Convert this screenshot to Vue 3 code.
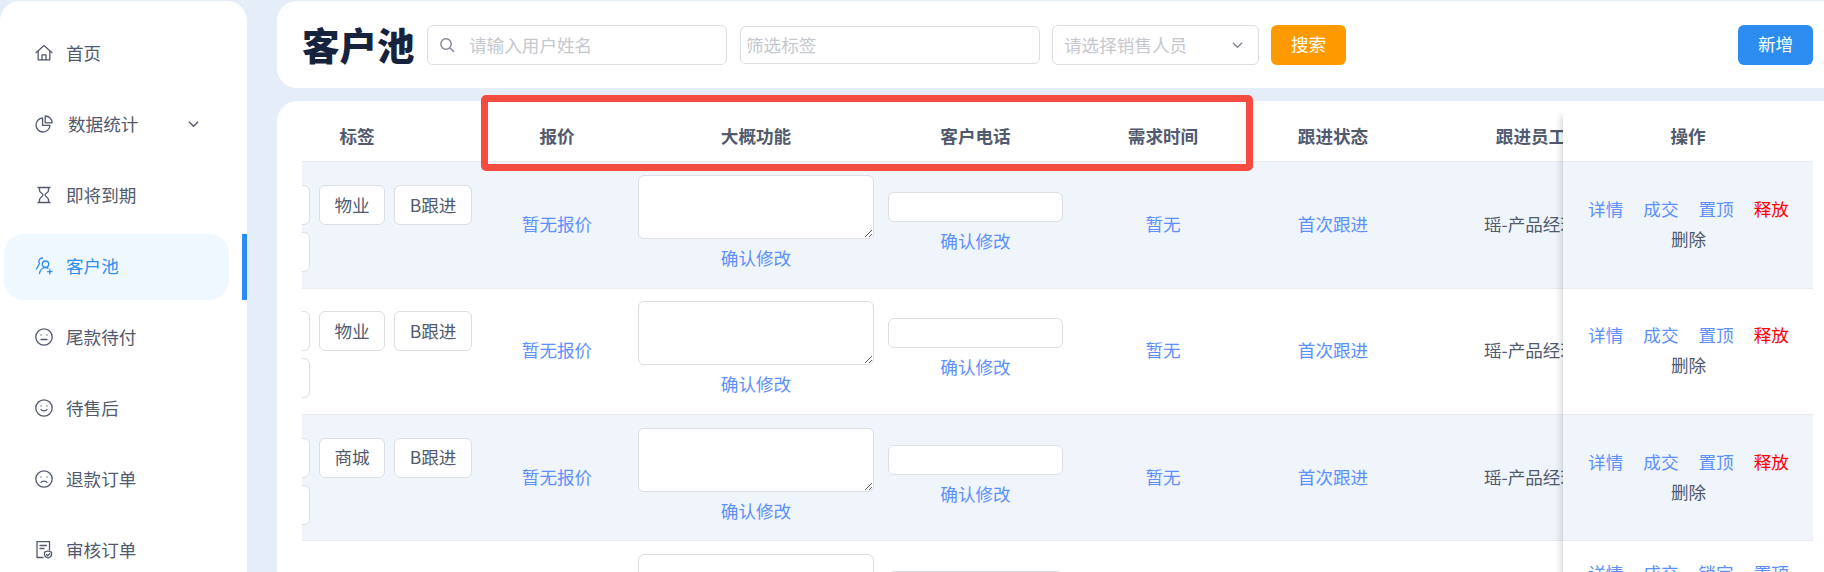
<template>
  <div class="page">
    <!-- SIDEBAR -->
    <aside class="side">
      <div v-for="m in menu" :key="m.name" class="menu-item" :class="{ active: m.active }">
        <svg class="menu-icon" viewBox="0 0 18 18" fill="none" stroke="currentColor" stroke-width="1.3" stroke-linecap="round" stroke-linejoin="round">
          <path v-for="(d, i) in m.paths" :key="i" :d="d" />
        </svg>
        <span class="menu-name" :class="{ shifted: m.arrow }">{{ m.name }}</span>
        <svg v-if="m.arrow" class="menu-arrow" viewBox="0 0 12 8" fill="none" stroke="currentColor" stroke-width="1.5">
          <path d="M1 1.5l5 5 5-5" />
        </svg>
      </div>
    </aside>

    <main class="main">
      <!-- TOOLBAR -->
      <div class="toolbar">
        <h1 class="title">客户池</h1>
        <div class="search-box">
          <svg class="search-icon" viewBox="0 0 16 16" fill="none" stroke="#808695" stroke-width="1.4" stroke-linecap="round">
            <circle cx="7" cy="7" r="5.2" />
            <path d="M11 11l3.6 3.6" />
          </svg>
          <input class="search-input" placeholder="请输入用户姓名" />
        </div>
        <input class="tag-filter" placeholder="筛选标签" />
        <div class="sales-select">
          <span>请选择销售人员</span>
          <svg class="select-arrow" viewBox="0 0 12 8" fill="none" stroke="#808695" stroke-width="1.5">
            <path d="M1 1.5l5 5 5-5" />
          </svg>
        </div>
        <button class="btn btn-orange">搜索</button>
        <button class="btn btn-blue">新增</button>
      </div>

      <!-- TABLE -->
      <div class="card">
        <div class="table-wrap">
          <div class="table-scroll">
            <div class="row head">
              <div class="cell c-tags">标签</div>
              <div class="cell c-price">报价</div>
              <div class="cell c-func">大概功能</div>
              <div class="cell c-phone">客户电话</div>
              <div class="cell c-time">需求时间</div>
              <div class="cell c-state">跟进状态</div>
              <div class="cell c-staff">跟进员工</div>
            </div>
            <div v-for="(r, idx) in rows" :key="idx" class="row body" :class="{ striped: idx % 2 === 0 }">
              <div class="cell c-tags">
                <div class="tags">
                  <span v-for="(t, i) in r.tags" :key="i" class="tag">{{ t }}</span>
                </div>
              </div>
              <div class="cell c-price link">暂无报价</div>
              <div class="cell c-func col">
                <textarea class="func-text"></textarea>
                <a class="link confirm">确认修改</a>
              </div>
              <div class="cell c-phone col">
                <input class="phone-input" />
                <a class="link confirm">确认修改</a>
              </div>
              <div class="cell c-time link">暂无</div>
              <div class="cell c-state link">首次跟进</div>
              <div class="cell c-staff">瑶-产品经理</div>
            </div>
          </div>

          <!-- fixed right column lies over the scrolled table -->
          <div class="fixed-col">
            <div class="row head"><div class="cell">操作</div></div>
            <div v-for="(r, idx) in rows" :key="idx" class="row body" :class="{ striped: idx % 2 === 0 }">
              <div class="actions">
                <a v-for="a in r.actions" :key="a.label" class="action" :class="a.kind">{{ a.label }}</a>
              </div>
            </div>
          </div>
        </div>
      </div>
    </main>

    <!-- red annotation frame drawn over the screenshot -->
    <div class="mark"></div>
  </div>
</template>

<script setup>
const menu = [
  { name: "首页", paths: ["M1 8.8L9 1.6l8 7.200", "M3.200 7.500v8.300h11.600V7.500", "M7 15.800v-5h4v5"] },
  { name: "数据统计", arrow: true, paths: ["M7.600 3a7 7 0 1 0 7.400 7.400H7.600z", "M10.200 1v6.800h7A7 7 0 0 0 10.200 1z"] },
  { name: "即将到期", paths: ["M3 1.500h12", "M3 16.500h12", "M4.500 2v2.500C4.500 6.500 8 7.500 8 9s-3.500 2.500-3.500 4.500V16", "M13.500 2v2.500C13.500 6.500 10 7.500 10 9s3.500 2.500 3.500 4.500V16"] },
  { name: "客户池", active: true, paths: ["M7.500 1a3.500 3.500 0 0 0-3 5.500L1.500 12", "M10.500 4a3.200 3.200 0 1 1 0 6.400 3.200 3.200 0 0 1 0-6.400z", "M4.500 16.500c.5-3.500 3-6 6-6 1 0 1.800.2 2.500.6", "M14.800 12.500v4.400M12.600 14.700H17"] },
  { name: "尾款待付", paths: ["M9 .8a8.200 8.200 0 1 0 0 16.400A8.200 8.200 0 0 0 9 .8z", "M6 7v.1M12 7v.1", "M6 11.500h6"] },
  { name: "待售后", paths: ["M9 .8a8.200 8.200 0 1 0 0 16.400A8.200 8.200 0 0 0 9 .8z", "M6 7v.1M12 7v.1", "M6 10.500c.8 1.800 5.200 1.800 6 0"] },
  { name: "退款订单", paths: ["M9 .8a8.200 8.200 0 1 0 0 16.400A8.200 8.200 0 0 0 9 .8z", "M6 7v.1M12 7v.1", "M6 12.500c.8-1.800 5.200-1.800 6 0"] },
  { name: "审核订单", paths: ["M8 16.500H2v-16h12.500V9", "M5 4.500h6.500M5 7.500h4", "M13 10l3.500 1.200v2.500c0 1.500-1.500 2.500-3.500 3.300-2-.8-3.500-1.800-3.500-3.300v-2.500z", "M11.500 13.500l1.200 1.200 2-2"] },
];

const baseActions = [
  { label: "详情", kind: "blue" },
  { label: "成交", kind: "blue" },
  { label: "置顶", kind: "blue" },
  { label: "释放", kind: "red" },
  { label: "删除", kind: "grey" },
];

// first tag of each row sits under the left edge of the scrolled table
const rows = [
  { tags: ["", "物业", "B跟进", ""], actions: baseActions },
  { tags: ["", "物业", "B跟进", ""], actions: baseActions },
  { tags: ["", "商城", "B跟进", ""], actions: baseActions },
  {
    tags: ["", "物业", "B跟进"],
    actions: [
      { label: "详情", kind: "blue" },
      { label: "成交", kind: "blue" },
      { label: "锁定", kind: "blue" },
      { label: "置顶", kind: "blue" },
      { label: "释放", kind: "red" },
      { label: "删除", kind: "grey" },
    ],
  },
];
</script>

<style>
html, body { margin: 0; background: #e4edf8; overflow: hidden; }
</style>

<style scoped>
.page {
  position: relative;
  display: flex;
  height: 572px;
  overflow: hidden;
  padding-top: 1px;
  box-sizing: border-box;
  background: #e4edf8;
  font-family: "Noto Sans CJK SC", "Liberation Sans", sans-serif;
  font-size: 17.6px;
  color: #515a6e;
}

/* ── Sidebar ── */
.side {
  position: relative;
  width: 247px;
  flex: none;
  box-sizing: border-box;
  padding: 20px 18px 0 4px;
  background: #fff;
  border-radius: 20px 20px 0 0;
  display: flex;
  flex-direction: column;
  gap: 5px;
}

.menu-item {
  position: relative;
  flex: none;
  height: 66px;
  display: flex;
  align-items: center;
  padding-left: 31px;
  border-radius: 20px;
  color: #515a6e;
}

.menu-item.active {
  background: #f0f8ff;
  color: #2d8cf0;
}

.menu-item.active::after {
  content: "";
  position: absolute;
  top: 0;
  bottom: 0;
  left: 238px;
  width: 5px;
  background: #2d8cf0;
}

.menu-icon { width: 18px; height: 18px; flex: none; margin-bottom: 2px; }
.menu-name { margin: 0 0 3px 13px; }
.menu-name.shifted { margin-left: 15px; }
.menu-arrow { width: 11px; height: 8px; margin-left: 50px; margin-bottom: 3px; }

/* ── Toolbar ── */
.main { flex: 1; min-width: 0; margin-left: 30px; }

.toolbar {
  height: 87px;
  box-sizing: border-box;
  display: flex;
  align-items: center;
  padding: 0 11px 0 26px;
  background: #fff;
  border-radius: 20px 0 0 20px;
}

.title {
  width: 113px;
  flex: none;
  margin: 0 12px 2px -1px;
  font-size: 37.5px;
  font-weight: 900;
  line-height: 40px;
  white-space: nowrap;
  color: #17233d;
}

.search-box {
  position: relative;
  width: 300px;
  height: 40px;
  margin-right: 13px;
}

.search-icon {
  position: absolute;
  top: 12px;
  left: 12px;
  width: 16px;
  height: 16px;
}

input, textarea {
  box-sizing: border-box;
  border: 1px solid #dcdee2;
  border-radius: 6px;
  background: #fff;
  font: inherit;
  color: #515a6e;
  outline: none;
}

input::placeholder { color: #c5c8ce; }

.search-input {
  width: 100%;
  height: 100%;
  padding: 0 8px 0 41px;
}

.tag-filter {
  width: 300px;
  height: 38px;
  padding: 0 5px;
  margin-right: 12px;
}

.sales-select {
  width: 207px;
  height: 40px;
  box-sizing: border-box;
  margin-right: 12px;
  padding: 0 15px 0 11px;
  display: flex;
  align-items: center;
  justify-content: space-between;
  border: 1px solid #dcdee2;
  border-radius: 6px;
  color: #c5c8ce;
}

.select-arrow { width: 11px; height: 8px; }

.btn {
  height: 40px;
  padding: 0 0 2px;
  border: none;
  border-radius: 6px;
  color: #fff;
  font: inherit;
}

.btn-orange { width: 75px; background: #ff9900; }
.btn-blue { width: 75px; margin-left: auto; background: #2d8cf0; }

/* ── Table ── */
.card {
  margin-top: 13px;
  height: 500px;
  box-sizing: border-box;
  padding: 12px 11px 0 25px;
  background: #fff;
  border-radius: 20px 0 0 0;
}

.table-wrap {
  position: relative;
  height: 100%;
  overflow: hidden;
}

.table-scroll {
  width: 1660px;
  margin-left: -70px;
}

.row {
  display: flex;
  box-sizing: border-box;
  border-bottom: 1px solid #e8eaec;
}

.head {
  height: 49.4px;
  font-weight: 700;
}

.body { height: 126.33px; }
.striped { background: #f0f5fc; }

.cell {
  flex: none;
  display: flex;
  align-items: center;
  justify-content: center;
  box-sizing: border-box;
  padding-bottom: 3px;
  text-align: center;
  white-space: nowrap;
}

.col { flex-direction: column; padding-bottom: 0; }

.c-tags { width: 250px; }
.c-price { width: 150px; }
.c-func { width: 248px; }
.c-phone { width: 191px; }
.c-time { width: 184px; }
.c-state { width: 156px; }
.c-staff { width: 240px; }

.tags {
  box-sizing: border-box;
  width: 100%;
  padding: 10px 0 0 12px;
  display: flex;
  flex-wrap: wrap;
  gap: 7px 9px;
}

.tag {
  width: 66px;
  height: 40px;
  box-sizing: border-box;
  padding-bottom: 2px;
  display: flex;
  align-items: center;
  justify-content: center;
  background: #fff;
  border: 1px solid #dcdee2;
  border-radius: 6px;
}

.tag:nth-child(3) { width: 78px; }

.link { color: #5c8fff; }

.func-text {
  display: block;
  width: 236px;
  height: 64px;
  resize: both;
}

.phone-input {
  width: 175px;
  height: 30px;
}

.confirm { margin: 4px 0 2px; line-height: 30px; }

/* ── Fixed column ── */
.fixed-col {
  position: absolute;
  top: 0;
  bottom: 0;
  right: 0;
  width: 250px;
  background: #fff;
  box-shadow: -3px 0 8px -2px rgba(0, 0, 0, 0.2);
}

.fixed-col .cell { width: 100%; }

.fixed-col .body {
  align-items: center;
  justify-content: center;
  padding: 0 0 2px 1px;
}

.actions {
  width: 220px;
  display: flex;
  flex-wrap: wrap;
  justify-content: center;
  column-gap: 20px;
  line-height: 30px;
}

.action.blue { color: #5c8fff; }
.action.red { color: #ff0000; }
.action.grey { flex-basis: 100%; text-align: center; color: #515a6e; }

/* ── Annotation ── */
.mark {
  position: absolute;
  left: 481px;
  top: 95px;
  width: 772px;
  height: 76px;
  box-sizing: border-box;
  border: 7px solid #f44c40;
  border-radius: 5px;
}
</style>
